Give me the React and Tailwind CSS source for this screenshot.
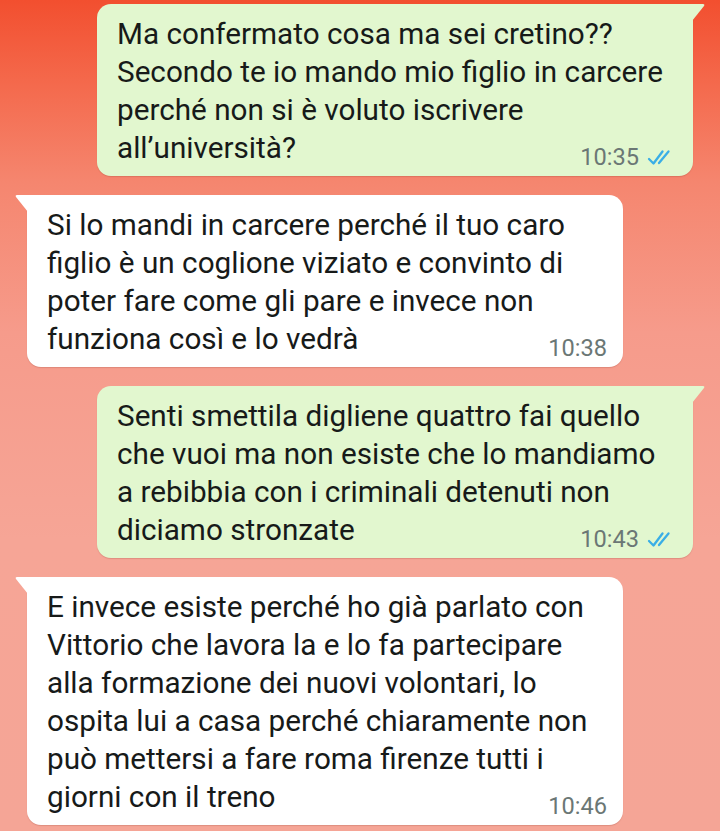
import React from 'react';

const messages = [
  {
    id: 1,
    out: true,
    lines: [
      'Ma confermato cosa ma sei cretino??',
      'Secondo te io mando mio figlio in carcere',
      'perché non si è voluto iscrivere',
      'all’università?',
    ],
    time: '10:35',
  },
  {
    id: 2,
    out: false,
    lines: [
      'Si lo mandi in carcere perché il tuo caro',
      'figlio è un coglione viziato e convinto di',
      'poter fare come gli pare e invece non',
      'funziona così e lo vedrà',
    ],
    time: '10:38',
  },
  {
    id: 3,
    out: true,
    lines: [
      'Senti smettila digliene quattro fai quello',
      'che vuoi ma non esiste che lo mandiamo',
      'a rebibbia con i criminali detenuti non',
      'diciamo stronzate',
    ],
    time: '10:43',
  },
  {
    id: 4,
    out: false,
    lines: [
      'E invece esiste perché ho già parlato con',
      'Vittorio che lavora la e lo fa partecipare',
      'alla formazione dei nuovi volontari, lo',
      'ospita lui a casa perché chiaramente non',
      'può mettersi a fare roma firenze tutti i',
      'giorni con il treno',
    ],
    time: '10:46',
  },
];

function Ticks() {
  return (
    <svg width="29" height="17" viewBox="0 0 29 17" fill="none" className="ml-[8px]">
      <path d="M2 10 L6.5 14.5 L15.5 2.5" stroke="#3aaee6" strokeWidth="2.3" strokeLinecap="round" strokeLinejoin="round" />
      <path d="M12 14 L21.5 2.5" stroke="#3aaee6" strokeWidth="2.3" strokeLinecap="round" />
    </svg>
  );
}

function Bubble({ msg }) {
  const bg = msg.out ? 'bg-[#e2f7cf]' : 'bg-white';
  return (
    <div className={`flex ${msg.out ? 'justify-end pr-[27px]' : 'justify-start pl-[27px]'}`}>
      <div
        className={`relative w-[596px] ${bg} pt-[11px] pb-[7px] pl-[20px] shadow-[0_1px_1px_rgba(120,40,30,0.18)] ${
          msg.out ? 'pr-[17px] rounded-[14px] rounded-tr-none' : 'pr-[16px] rounded-[14px] rounded-tl-none'
        }`}
      >
        {/* tail */}
        {msg.out ? (
          <svg className="absolute top-0 right-[-12px]" width="13" height="18" viewBox="0 0 13 18">
            <path d="M0 0 H11 Q13 0 12 2 L0 17 Z" fill="#e2f7cf" />
          </svg>
        ) : (
          <svg className="absolute top-0 left-[-12px]" width="13" height="18" viewBox="0 0 13 18">
            <path d="M13 0 H2 Q0 0 1 2 L13 17 Z" fill="#ffffff" />
          </svg>
        )}
        <div className="text-[29.7px] leading-[38px] text-[#171a19]">
          {msg.lines.map((l, i) => (
            <div key={i} className="whitespace-nowrap">{l}</div>
          ))}
        </div>
        <div className="flex items-center justify-end mt-[-22px] h-[24px]">
          <span className="text-[23.6px] leading-[24px] text-[#6b7775]">{msg.time}</span>
          {msg.out && <Ticks />}
        </div>
      </div>
    </div>
  );
}

export default function App() {
  return (
    <div
      className="w-[720px] h-[831px] overflow-hidden pt-[4px] flex flex-col gap-[19px] bg-[linear-gradient(180deg,#f24f2f_0%,#f4694c_10%,#f5866f_22%,#f69b8b_40%,#f6a596_65%,#f5a596_100%)]"
      style={{ fontFamily: 'Roboto, "Noto Sans", sans-serif' }}
    >
      {messages.map((m) => (
        <Bubble key={m.id} msg={m} />
      ))}
    </div>
  );
}
